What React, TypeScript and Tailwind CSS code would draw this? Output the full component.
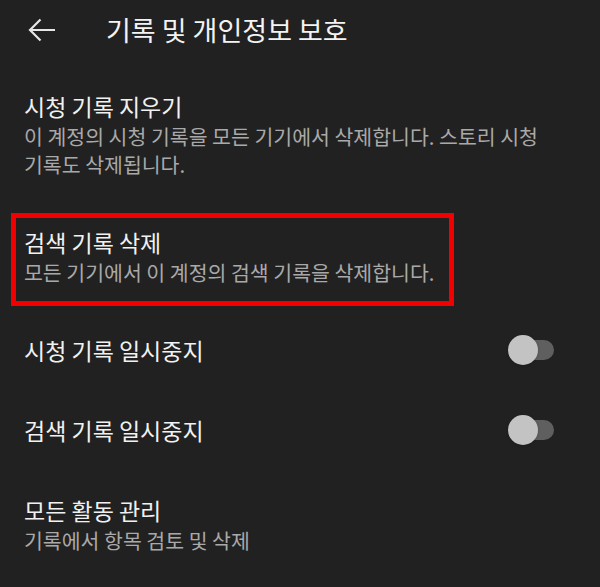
const FONT = '[font-family:"Noto_Sans_CJK_KR","Noto_Sans",sans-serif]';

interface Item {
  title: string;
  desc?: string[];
  toggle?: boolean;
  marked?: boolean;
}

const items: Item[] = [
  {
    title: "시청 기록 지우기",
    desc: ["이 계정의 시청 기록을 모든 기기에서 삭제합니다. 스토리 시청", "기록도 삭제됩니다."],
  },
  {
    title: "검색 기록 삭제",
    desc: ["모든 기기에서 이 계정의 검색 기록을 삭제합니다."],
    marked: true,
  },
  { title: "시청 기록 일시중지", toggle: true },
  { title: "검색 기록 일시중지", toggle: true },
  { title: "모든 활동 관리", desc: ["기록에서 항목 검토 및 삭제"] },
];

const Toggle = () => (
  <div className="relative w-[46px] h-[30px] flex items-center">
    <div className="ml-[2px] w-[44px] h-[20px] rounded-full bg-[#5f5f5f]" />
    <div className="absolute left-0 top-0 w-[30px] h-[30px] rounded-full bg-[#c3c3c3] shadow" />
  </div>
);

const Row = ({ item }: { item: Item }) => {
  if (item.toggle) {
    return (
      <div className="h-[80px] flex items-center justify-between pl-[24px] pr-[46px]">
        <div className="text-[23px] leading-[32px] text-[#f1f1f1]">{item.title}</div>
        <Toggle />
      </div>
    );
  }
  return (
    <div className="relative py-[24px] pl-[24px] pr-2">
      <div className="text-[23px] leading-[32px] text-[#f1f1f1]">{item.title}</div>
      {item.desc?.map((line, i) => (
        <div key={i} className="text-[20.5px] leading-[28px] whitespace-nowrap text-[#a9a9a9]">
          {line}
        </div>
      ))}
      {item.marked && (
        <div className="absolute left-[11px] top-[11px] w-[443px] h-[93px] border-[5px] border-[#f20000]" />
      )}
    </div>
  );
};

const App = () => {
  return (
    <div className={`w-[600px] h-[587px] overflow-hidden bg-[#212121] ${FONT}`}>
      <div className="h-[60px] flex items-center">
        <button className="ml-[28px] w-[28px] h-[24px] flex items-center">
          <svg width="28" height="24" viewBox="0 0 28 24" fill="none">
            <path d="M2 12H27M12.5 1.5L2 12l10.5 10.5" stroke="#e6e6e6" strokeWidth="2.2" />
          </svg>
        </button>
        <div className="ml-[50px] text-[27px] leading-[34px] text-[#f3f3f3]">기록 및 개인정보 보호</div>
      </div>
      <div className="pt-[6px]">
        {items.map((item) => (
          <Row key={item.title} item={item} />
        ))}
      </div>
    </div>
  );
};

export default App;
